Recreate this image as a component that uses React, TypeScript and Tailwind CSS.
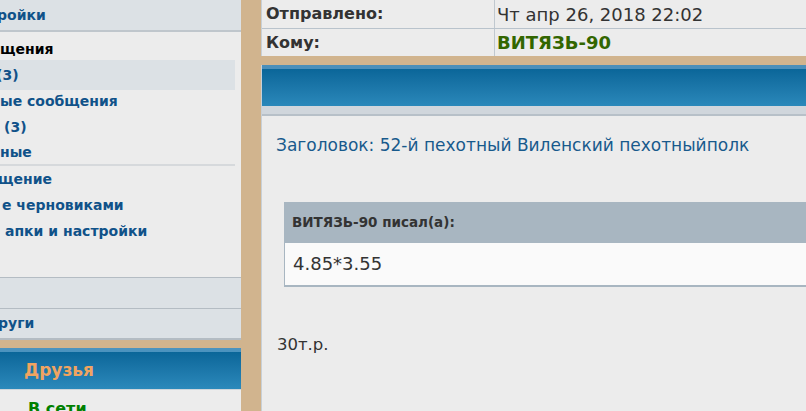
import React from "react";

const FONT = { fontFamily: '"DejaVu Sans", Verdana, sans-serif' };

const SideLink = ({ text, shift = 0, active = false, dark = false }: { text: string; shift?: number; active?: boolean; dark?: boolean }) => (
  <div className={`flex items-center mr-[6px] ${active ? "h-[30px] -my-[2px] bg-[#dce1e5]" : "h-[26px]"}`}>
    <span
      className={`text-[14px] font-bold whitespace-nowrap ${dark ? "text-black" : "text-[#105289]"}`}
      style={{ marginLeft: shift }}
    >
      {text}
    </span>
  </div>
);

export default function App() {
  return (
    <div className="w-[806px] h-[411px] overflow-hidden flex bg-[#d1b48e]" style={FONT}>
      {/* Sidebar */}
      <div className="w-[241px] shrink-0 flex flex-col">
        <div className="bg-[#ececec] h-[277px] shrink-0 flex flex-col">
          <div className="h-[32px] shrink-0 bg-[#dce1e5] border-b-2 border-[#bfc6cc] flex items-center">
            <span className="text-[14px] font-bold text-[#105289] ml-[-3px]">ройки</span>
          </div>
          <div className="pt-[4px]">
            <SideLink text="щения" dark />
            <SideLink text="(3)" shift={-4} active />
            <SideLink text="ые сообщения" />
            <SideLink text="(3)" shift={4} />
            <div className="h-[26px] flex items-center mr-[6px] border-b-2 border-[#d6d9dc]">
              <span className="text-[14px] font-bold text-[#105289]">ные</span>
            </div>
            <SideLink text="щение" shift={-2} />
            <SideLink text="е черновиками" shift={2} />
            <SideLink text="апки и настройки" shift={5} />
          </div>
        </div>
        <div className="h-[31px] shrink-0 bg-[#dce1e5] border-t border-[#b4bcc3]" />
        <div className="h-[32px] shrink-0 bg-[#dce1e5] border-t border-b-2 border-[#b4bcc3] flex items-center">
          <span className="text-[14px] font-bold text-[#105289] ml-[-2px]">руги</span>
        </div>
        <div className="h-[8px] shrink-0" />
        <div className="h-[41px] shrink-0 bg-gradient-to-b from-[#0a6699] to-[#2b89bb] border-t-[4px] border-[#4b93bf] flex items-center">
          <span className="ml-[24px] text-[17px] font-bold text-[#f0a461]">Друзья</span>
        </div>
        <div className="flex-1 bg-[#ececec] border-t border-[#cfd6dc]">
          <div className="ml-[28px] pt-[7px] text-[16px] font-bold text-[#008000]">В сети</div>
        </div>
      </div>

      <div className="w-[20px] shrink-0" />

      {/* Main */}
      <div className="flex-1 flex flex-col">
        <div className="bg-[#ececec] border-l border-[#c8d0d7] text-[#333]">
          <div className="flex h-[29px] border-b border-[#b9c3cc]">
            <div className="w-[233px] border-r border-[#c0c8cf] flex items-center pl-[4px] text-[16px] font-bold">Отправлено:</div>
            <div className="flex items-center pl-[2px] text-[18px]">Чт апр 26, 2018 22:02</div>
          </div>
          <div className="flex h-[27px]">
            <div className="w-[233px] border-r border-[#c0c8cf] flex items-center pl-[4px] text-[16px] font-bold">Кому:</div>
            <div className="flex items-center pl-[2px] font-bold text-[#336600] text-[18px]">ВИТЯЗЬ-90</div>
          </div>
        </div>
        <div className="h-[9px] shrink-0" />
        <div className="flex-1 bg-[#ececec] border-l border-[#c8d0d7] flex flex-col">
          <div className="h-[4px] shrink-0 bg-[#4b8fba]" />
          <div className="h-[37px] shrink-0 bg-gradient-to-b from-[#0a6699] to-[#2a88ba]" />
          <div className="h-[10px] shrink-0 bg-[#d0d6dc] border-b-2 border-[#b7c0c8]" />
          <div className="pl-[14px] pt-[17px] text-[17px] text-[#185a8c] whitespace-nowrap">
            Заголовок: 52-й пехотный Виленский пехотныйполк
          </div>
          <div className="ml-[22px] mt-[43px] border-l border-b-2 border-[#a8b6c1]">
            <div className="h-[41px] bg-[#a8b6c1] flex items-center pl-[7px] text-[13.5px] font-bold text-[#333]">
              ВИТЯЗЬ-90 писал(а):
            </div>
            <div className="h-[42px] bg-[#fafafa] flex items-center pl-[8px] text-[18px] text-[#333]">
              4.85*3.55
            </div>
          </div>
          <div className="pl-[15px] pt-[46px] text-[16.5px] text-[#333]">30т.р.</div>
        </div>
      </div>
    </div>
  );
}
